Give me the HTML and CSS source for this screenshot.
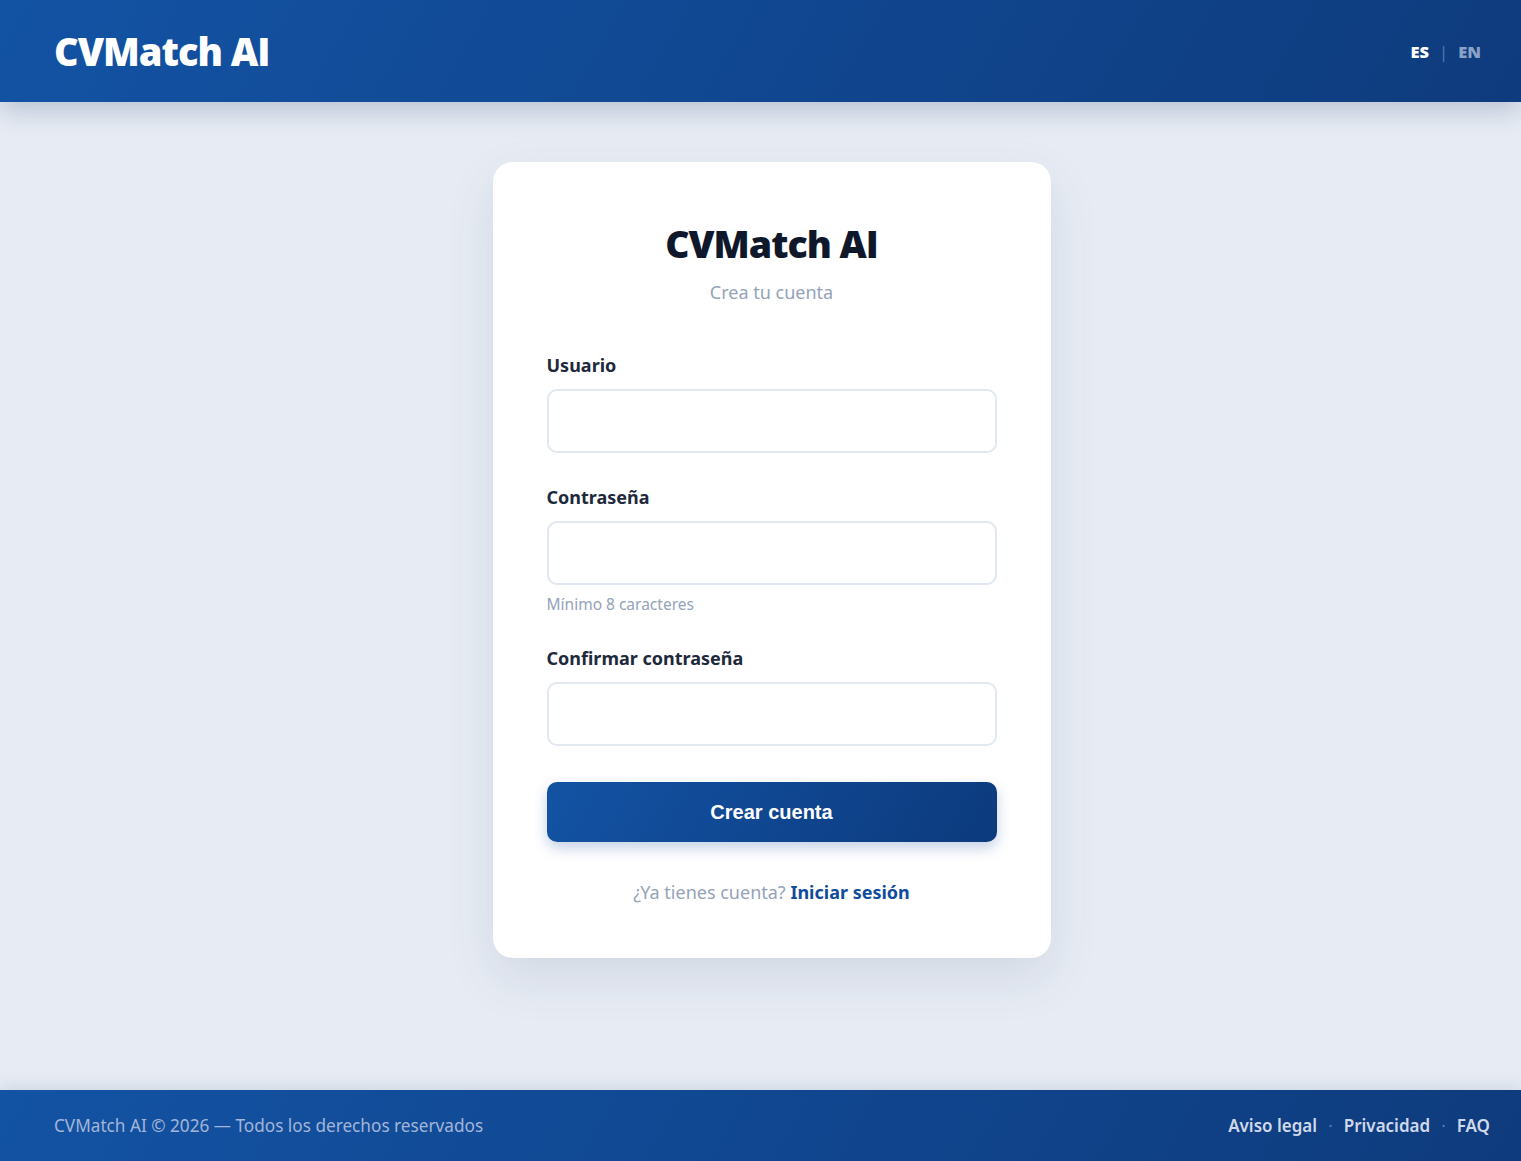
FILE: index.html
```html
<!DOCTYPE html>
<html lang="es">
<head>
    <meta charset="UTF-8">
    <title>CVMatch AI - Crear cuenta</title>
    <meta name="viewport" content="width=device-width, initial-scale=1.0">
    <link rel="stylesheet" href="styles.css">
</head>
<body>

<header class="topbar">
    <a class="brand" href="#">CVMatch AI</a>
    <nav class="lang">
        <a class="lang-item active" href="#">ES</a>
        <span class="lang-sep">|</span>
        <a class="lang-item" href="#">EN</a>
    </nav>
</header>

<main class="page">
    <div class="card">
        <h1 class="card-title">CVMatch AI</h1>
        <p class="card-sub">Crea tu cuenta</p>

        <form class="form" id="registerForm">
            <div class="field">
                <label for="usuario">Usuario</label>
                <input type="text" id="usuario">
            </div>
            <div class="field">
                <label for="password">Contraseña</label>
                <input type="password" id="password">
                <small class="hint">Mínimo 8 caracteres</small>
            </div>
            <div class="field">
                <label for="password2">Confirmar contraseña</label>
                <input type="password" id="password2">
            </div>
            <button type="submit" class="btn">Crear cuenta</button>
        </form>

        <p class="switch">¿Ya tienes cuenta? <a href="#">Iniciar sesión</a></p>
    </div>
</main>

<footer class="footer">
    <span class="copy">CVMatch AI © 2026 — Todos los derechos reservados</span>
    <nav class="footer-links">
        <a href="#">Aviso legal</a>
        <span class="dot">·</span>
        <a href="#">Privacidad</a>
        <span class="dot">·</span>
        <a href="#">FAQ</a>
    </nav>
</footer>

</body>
</html>
```

FILE: styles.css
```css
* { box-sizing: border-box; }
html, body { height: 100%; }
body { margin: 0; font-family: "Noto Sans", "Open Sans", sans-serif; background: #e7ecf4; color: #1e293b; display: flex; flex-direction: column; min-height: 100vh; }
a { text-decoration: none; }

.topbar { height: 102px; display: flex; align-items: center; justify-content: space-between; padding: 0 40px 0 54px; background: linear-gradient(120deg, #1353a4 0%, #0e3b7d 100%); box-shadow: 0 8px 26px rgba(15, 40, 90, 0.22); position: relative; z-index: 1; }
.brand { font-family: "Open Sans", sans-serif; font-weight: 800; font-size: 38px; letter-spacing: -1px; color: #fff; }
.lang { display: flex; align-items: center; gap: 10px; font-family: "Open Sans", sans-serif; font-size: 16.5px; font-weight: 800; }
.lang-item { color: #8aa2c8; }
.lang-item.active { color: #fff; }
.lang-sep { color: #5a7cb0; font-weight: 400; }

.page { flex: 1; display: flex; justify-content: center; align-items: flex-start; padding: 60px 0 0 22px; }
.card { width: 558px; background: #fff; border-radius: 20px; padding: 56px 54px 54px; box-shadow: 0 20px 50px rgba(30, 50, 90, 0.10); text-align: center; }
.card-title { margin: 4px 0 0; font-family: "Open Sans", sans-serif; font-weight: 800; font-size: 37.5px; letter-spacing: -1px; line-height: 44px; color: #0f172a; }
.card-sub { margin: 14px 0 0; font-size: 18px; line-height: 24px; color: #94a3b8; }

.form { margin-top: 49px; text-align: left; }
.field { display: flex; flex-direction: column; margin-bottom: 32px; }
.field label { font-size: 18px; font-weight: 700; line-height: 24px; color: #1e293b; margin-bottom: 12px; }
.field input { height: 64px; border: 2px solid #e2e8f0; border-radius: 10px; padding: 0 16px; font-size: 17px; font-family: inherit; outline: none; }
.hint { margin-top: 9px; font-size: 15.5px; line-height: 20px; color: #94a3b8; }
/* margin collapses with the field above, so this is the full gap */
.btn { display: block; width: 100%; height: 60px; margin-top: 36px; border: none; border-radius: 10px; background: linear-gradient(120deg, #1353a4 0%, #0c3a7d 100%); color: #fff; font-family: "Liberation Sans", Arial, sans-serif; font-size: 20px; font-weight: 700; cursor: pointer; box-shadow: 0 6px 14px rgba(19, 70, 150, 0.25); }

.switch { margin: 38px 0 0; font-size: 18px; line-height: 24px; color: #94a3b8; }
.switch a { color: #0f4c9c; font-weight: 700; }

.footer { height: 71px; display: flex; align-items: center; justify-content: space-between; padding: 0 31px 0 54px; background: linear-gradient(120deg, #1353a4 0%, #0e3b7d 100%); box-shadow: 0 -4px 16px rgba(15, 40, 90, 0.10); }
.copy { font-size: 17.2px; color: #a3b6d8; }
.footer-links { display: flex; align-items: center; gap: 11px; font-size: 17px; }
.footer-links a { color: #cfd9ea; font-weight: 600; }
.dot { color: #5a7cb0; }
```
